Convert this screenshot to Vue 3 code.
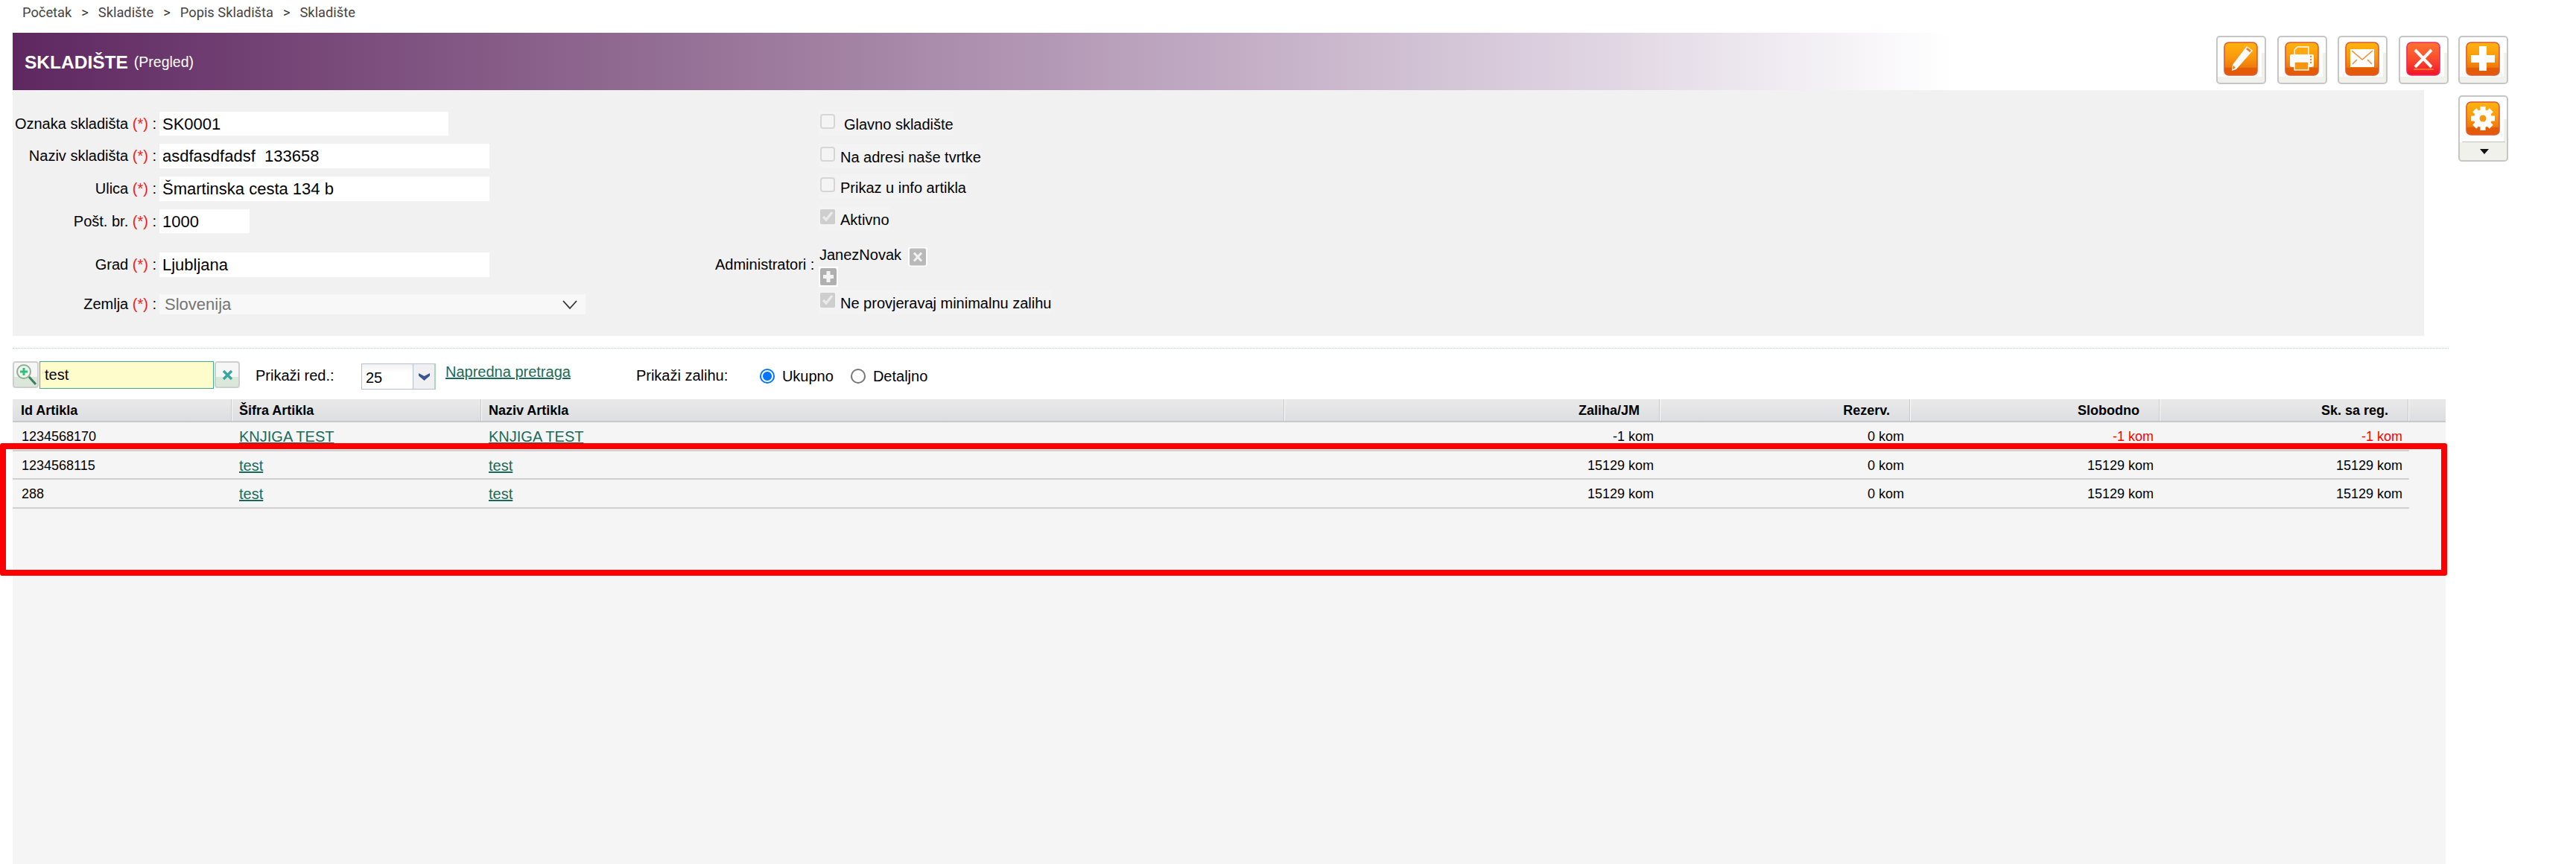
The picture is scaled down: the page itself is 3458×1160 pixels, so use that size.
<script setup>
const crumbs = ['Početak', 'Skladište', 'Popis Skladišta', 'Skladište']
const fields = [
  { label: 'Oznaka skladišta', value: 'SK0001', cls: 'w388', gap: 0 },
  { label: 'Naziv skladišta', value: 'asdfasdfadsf  133658', cls: 'w443', gap: 11 },
  { label: 'Ulica', value: 'Šmartinska cesta 134 b', cls: 'w443', gap: 11 },
  { label: 'Pošt. br.', value: '1000', cls: 'w121', gap: 11 },
  { label: 'Grad', value: 'Ljubljana', cls: 'w443', gap: 26 }
]
const columns = [
  { t: 'Id Artikla', c: 'c1' }, { t: 'Šifra Artikla', c: 'c2' }, { t: 'Naziv Artikla', c: 'c3' },
  { t: 'Zaliha/JM', c: 'c5 num' }, { t: 'Rezerv.', c: 'c6 num' },
  { t: 'Slobodno', c: 'c7 num' }, { t: 'Sk. sa reg.', c: 'c8 num' }, { t: '', c: 'c9' }
]
const rows = [
  { id: '1234568170', s: 'KNJIGA TEST', z: '-1 kom', r: '0 kom', f: '-1 kom', k: '-1 kom', neg: true },
  { id: '1234568115', s: 'test', z: '15129 kom', r: '0 kom', f: '15129 kom', k: '15129 kom' },
  { id: '288', s: 'test', z: '15129 kom', r: '0 kom', f: '15129 kom', k: '15129 kom' }
]
</script>

<template>
  <div class="page">
    <nav class="crumbs">
      <template v-for="(c, i) in crumbs" :key="i">
        <span v-if="i" class="sep">&gt;</span><span>{{ c }}</span>
      </template>
    </nav>

    <div class="top">
      <div class="titlebar"><b>SKLADIŠTE</b><span>(Pregled)</span></div>
      <div class="actions">
        <button class="tool">
          <svg class="tile" viewBox="0 0 46 46">
            <defs>
              <linearGradient id="og" x1="0" y1="0" x2="0" y2="1">
                <stop offset="0" stop-color="#ffb40e" /><stop offset=".45" stop-color="#fb980e" />
                <stop offset=".76" stop-color="#ee7a0a" /><stop offset=".77" stop-color="#e35c06" /><stop offset="1" stop-color="#e55a08" />
              </linearGradient>
              <linearGradient id="rg" x1="0" y1="0" x2="0" y2="1">
                <stop offset="0" stop-color="#ff7430" /><stop offset=".5" stop-color="#fb4d2e" /><stop offset="1" stop-color="#f01226" />
              </linearGradient>
            </defs>
            <rect x="1" y="1" width="44" height="44" rx="6" fill="url(#og)" stroke="#dc5a34" stroke-width="1.6" />
            <path d="M31 6l8 6-22 25-6 2 1-8z" fill="#fff" />
            <path d="M32 8l5 4-2 2-5-4z" fill="#f5792a" />
            <path d="M13 32l3 3-4 2z" fill="#ee7a12" />
          </svg>
        </button>
        <button class="tool">
          <svg class="tile" viewBox="0 0 46 46">
            <rect x="1" y="1" width="44" height="44" rx="6" fill="url(#og)" stroke="#dc5a34" stroke-width="1.6" />
            <path d="M17 7h15v11H13v-7z" fill="#ffa90f" stroke="#fff" stroke-width="1.4" />
            <rect x="7" y="17" width="32" height="17" rx="2" fill="#fafafa" />
            <circle cx="35" cy="20" r="1.2" fill="#f58a20" /><circle cx="35" cy="24" r="1.2" fill="#f58a20" /><circle cx="35" cy="28" r="1.2" fill="#f58a20" />
            <rect x="13" y="27" width="19" height="11" fill="#f7950f" stroke="#fff" stroke-width="1.4" />
          </svg>
        </button>
        <button class="tool">
          <svg class="tile" viewBox="0 0 46 46">
            <rect x="1" y="1" width="44" height="44" rx="6" fill="url(#og)" stroke="#dc5a34" stroke-width="1.6" />
            <rect x="7" y="10" width="32" height="24" fill="#fff" />
            <path d="M9 12l14 12 14-12M10 30l6-6M36 30l-6-6" fill="none" stroke="#f58a30" stroke-width="1.5" />
          </svg>
        </button>
        <button class="tool">
          <svg class="tile" viewBox="0 0 46 46">
            <rect x="1" y="1" width="44" height="44" rx="6" fill="url(#rg)" stroke="#ee2a62" stroke-width="1.6" />
            <path d="M12 11l22 23M34 11L12 34" stroke="#fff" stroke-width="4" />
            <path d="M10 37h27" stroke="#f89a3c" stroke-width="1.2" />
          </svg>
        </button>
        <div class="stack">
          <button class="tool">
            <svg class="tile" viewBox="0 0 46 46">
              <rect x="1" y="1" width="44" height="44" rx="6" fill="url(#og)" stroke="#dc5a34" stroke-width="1.6" />
              <path d="M18 6h10v12h11v10H28v11H18V28H7V18h11z" fill="#fff" />
            </svg>
          </button>
          <button class="tool gear">
            <svg class="tile" viewBox="0 0 46 46">
              <rect x="1" y="1" width="44" height="44" rx="6" fill="url(#og)" stroke="#dc5a34" stroke-width="1.6" />
              <circle cx="23" cy="23" r="12" fill="#fff" />
              <path d="M23 7v32M7 23h32M11.700 11.700l22.600 22.600M34.300 11.700L11.700 34.300" stroke="#fff" stroke-width="7" />
              <circle cx="23" cy="23" r="4.500" fill="#f9960e" />
            </svg>
            <span class="caret"></span>
          </button>
        </div>
      </div>
    </div>

    <section class="panel">
      <div class="left">
        <div v-for="f in fields" :key="f.label" class="field" :style="{ marginTop: f.gap + 'px' }">
          <label>{{ f.label }} <em>(*)</em> :</label>
          <div class="input" :class="f.cls">{{ f.value }}</div>
        </div>
        <div class="field country">
          <label>Zemlja <em>(*)</em> :</label>
          <div class="select">
            <span>Slovenija</span>
            <svg width="22" height="14" viewBox="0 0 22 14"><path d="M2 2l9 10 9-10" fill="none" stroke="#333" stroke-width="1.800" /></svg>
          </div>
        </div>
      </div>
      <div class="right">
        <label class="chk first"><input type="checkbox" disabled /><span>Glavno skladište</span></label>
        <label class="chk second"><input type="checkbox" disabled /><span>Na adresi naše tvrtke</span></label>
        <label class="chk third"><input type="checkbox" disabled /><span>Prikaz u info artikla</span></label>
        <label class="chk fourth"><input type="checkbox" disabled checked /><span>Aktivno</span></label>
        <div class="admin">
          <span class="admin-label">Administratori :</span>
          <div class="admin-value">
            <div class="admin-name">JanezNovak
              <i class="mini"><svg viewBox="0 0 26 25"><rect x="2" y="1" width="22" height="23" rx="2" fill="#b9b9b9" /><path d="M8 7l10 11M18 7L8 18" stroke="#f2f2f2" stroke-width="3" /></svg></i>
            </div>
            <i class="mini plus"><svg viewBox="0 0 26 27"><rect x="2" y="2" width="22" height="23" rx="2" fill="#b0b0b0" /><path d="M13 6v15M6 13.500h14" stroke="#f4f4f4" stroke-width="5" /></svg></i>
          </div>
        </div>
        <label class="chk last"><input type="checkbox" disabled checked /><span>Ne provjeravaj minimalnu zalihu</span></label>
      </div>
    </section>

    <div class="dots"></div>

    <div class="filters">
      <div class="search">
        <button class="sbtn">
          <svg width="31" height="32" viewBox="0 0 31 32">
            <circle cx="13" cy="12" r="9" fill="#eef6ee" stroke="#8fae9a" stroke-width="2" />
            <path d="M13 7v10M8 12h10" stroke="#2fbf7a" stroke-width="3" />
            <path d="M20 19l9 10" stroke="#3d7d62" stroke-width="3" />
          </svg>
        </button>
        <div class="sinput">test</div>
        <button class="sbtn clear">
          <svg width="30" height="32" viewBox="0 0 30 32">
            <path d="M10 11l11 11M21 11L10 22" stroke="#3aa5a0" stroke-width="3.500" />
          </svg>
        </button>
      </div>
      <span class="f-label rows-label">Prikaži red.:</span>
      <div class="pager"><span>25</span><i><svg width="15" height="10" viewBox="0 0 15 10"><path d="M0 0l7.500 4L15 0v3.500L7.500 10 0 3.500z" fill="#3b5590" /></svg></i></div>
      <a class="adv">Napredna pretraga</a>
      <span class="f-label stock">Prikaži zalihu:</span>
      <label class="radio"><input type="radio" name="z" checked />Ukupno</label>
      <label class="radio"><input type="radio" name="z" />Detaljno</label>
    </div>

    <section class="grid">
      <div class="ghead">
        <div v-for="(c, i) in columns" :key="i" class="th" :class="c.c">{{ c.t }}</div>
      </div>
      <div v-for="r in rows" :key="r.id" class="tr">
        <div class="td c1">{{ r.id }}</div>
        <div class="td c2"><a>{{ r.s }}</a></div>
        <div class="td c3"><a>{{ r.s }}</a></div>
        <div class="td c5 num">{{ r.z }}</div>
        <div class="td c6 num">{{ r.r }}</div>
        <div class="td c7 num" :class="{ neg: r.neg }">{{ r.f }}</div>
        <div class="td c8 num" :class="{ neg: r.neg }">{{ r.k }}</div>
      </div>
    </section>

    <div class="highlight"></div>
  </div>
</template>

<style>
html, body { margin: 0; background: #fff; overflow: hidden; }
</style>

<style scoped>
.page { position: relative; width: 3458px; height: 1160px; font-family: "Liberation Sans", Arial, sans-serif; color: #000; overflow: hidden; }
.crumbs { height: 44px; box-sizing: border-box; padding: 5px 0 0 30px; font: 18.300px/24px Roboto, "Liberation Sans", sans-serif; color: #444; display: flex; }
.sep { margin: 0 13px; color: #333; }
.top { height: 77px; position: relative; }
.titlebar { margin-left: 17px; width: 2600px; height: 77px; box-sizing: border-box; padding: 2px 0 0 16px; display: flex; align-items: center; gap: 8px; color: #fff; background: linear-gradient(90deg, #5e2760 0%, #946f95 34%, #b9a0bb 57%, #dfd4e2 81.500%, #f0ecf2 91.600%, #fff 100%); }
.titlebar b { font-size: 24.500px; }
.titlebar span { font-size: 19.500px; }
.actions { position: absolute; top: 4px; left: 2975px; display: flex; gap: 14.500px; align-items: flex-start; }
.stack { display: flex; flex-direction: column; gap: 15px; margin-left: -1.500px; }
.tool { position: relative; width: 67px; height: 65px; padding: 0; box-sizing: border-box; border: 2px solid #c6c6c6; border-radius: 5px; background:
  linear-gradient(#eff1ea, #eff1ea) left bottom / 100% 8px no-repeat,
  linear-gradient(#eff1ea, #eff1ea) right bottom / 4px 65% no-repeat, #fff; display: block; }
.tile { position: absolute; left: 8px; top: 6px; width: 46px; height: 46px; }
.gear { height: 89px; background:
  linear-gradient(#eff1ea, #eff1ea) left bottom / 100% 24px no-repeat,
  linear-gradient(#c4c4c4, #c4c4c4) 3px 60px / 58px 2px no-repeat,
  linear-gradient(#eff1ea, #eff1ea) right 30px / 4px 30px no-repeat, #fff; }
.caret { position: absolute; left: 27px; top: 70px; border: 6px solid transparent; border-top: 7px solid #111; border-bottom: 0; }

.panel { margin-left: 17px; width: 3237px; height: 330px; background: #f1f1f1; display: flex; box-sizing: border-box; padding-top: 29px; }
.left { width: 933px; flex: none; }
.field { display: flex; align-items: center; }
.field label { width: 193px; margin-right: 4px; text-align: right; font-size: 20px; white-space: pre; }
.field em { color: #e22; font-style: normal; }
.input { height: 33px; background: #fff; font-size: 22px; line-height: 33px; padding-left: 4px; box-sizing: border-box; white-space: pre; }
.w388 { width: 388px; height: 32px; }
.w443 { width: 443px; }
.w121 { width: 121px; height: 32px; }
.country { margin-top: 23px; }
.select { width: 572px; height: 27px; background: #f8f8f8; color: #757575; font-size: 22px; padding: 0 10px 0 7px; box-sizing: border-box; display: flex; justify-content: space-between; align-items: center; }
.right { flex: 1; font-size: 20px; }
.chk { display: flex; align-items: flex-start; width: max-content; margin-left: 149px; height: 32px; background: #f3f3f3; }
.chk input { width: 20px; height: 20px; margin: 4px 7px 0 2px; flex: none; }
.chk input:not(:checked) { appearance: none; box-sizing: border-box; border: 2px solid #d6d6d6; border-radius: 4px; background: #f4f4f4; }
.chk input:checked { accent-color: #c8c8c8; }
.chk span { line-height: 36px; }
.chk.first { margin-top: -1px; }
.chk.first span { margin-left: 5px; }
.chk.second { margin-top: 12px; }
.chk.third { margin-top: 9px; }
.chk.fourth { margin-top: 11px; }
.admin { display: flex; margin-top: 21px; }
.admin-label { width: 149px; padding-left: 10px; box-sizing: border-box; line-height: 24px; margin-top: 13px; }
.admin-value { width: 200px; }
.admin-name { height: 28px; line-height: 24px; padding-left: 1px; display: flex; gap: 9px; }
.mini { display: block; width: 26px; height: 26px; background: #fff; margin-top: 2px; }
.mini.plus { height: 27px; margin-top: 0; }
.mini svg { display: block; width: 26px; height: 100%; }
.chk.last { margin-top: 4px; }

.dots { margin: 16px 0 0 17px; width: 3270px; border-top: 1px dotted #bcc9c5; }
.filters { margin: 17px 0 0 17px; height: 40px; display: flex; align-items: flex-start; font-size: 20px; }
.search { display: flex; }
.sbtn { width: 35px; height: 36px; padding: 0; box-sizing: border-box; border: 2px solid #cfcfcf; border-radius: 4px; background: linear-gradient(#f6f6f6 60%, #d9e8d8 60%); display: flex; align-items: center; justify-content: center; }
.sbtn.clear { width: 34px; }
.sinput { width: 234px; height: 37px; margin: 0 1px; box-sizing: border-box; border: 1px solid #3fb191; background: #fffccc; padding-left: 6px; line-height: 35px; }
.f-label { margin: 7px 0 0 0; line-height: 24px; }
.rows-label { margin-left: 21px; width: 142px; }
.pager { width: 100px; height: 35px; margin-top: 3px; box-sizing: border-box; border: 1px solid #b4bfd4; border-right: 2px solid #a8d8b8; background: linear-gradient(#f2f2f2, #fff 35%); display: flex; justify-content: space-between; line-height: 36px; padding-left: 5px; }
.pager i { width: 29px; border-left: 1px solid #b4bfd4; background: #f0f0f2; display: flex; justify-content: center; padding-top: 12px; box-sizing: border-box; }
.pager svg { display: block; }
.adv { margin: 2px 0 0 13px; line-height: 24px; color: #1a6a5a; text-decoration: underline; }
.f-label.stock { margin-left: 88px; width: 166px; }
.radio { display: flex; align-items: center; margin-top: 8px; height: 24px; width: 122px; }
.radio input { appearance: none; box-sizing: border-box; width: 20px; height: 20px; margin: 0 10px 0 0; border: 2px solid #767676; border-radius: 50%; background: #fff; }
.radio input:checked { border-color: #0075ff; background: radial-gradient(circle, #0075ff 0, #0075ff 5.500px, #fff 6.500px); }

.grid { margin: 11px 0 0 17px; width: 3266px; height: 624px; background: #f5f5f5; font-size: 18px; }
.ghead { display: flex; height: 29px; background: linear-gradient(#e8e8e8 0, #e8e8e8 20%, #dcdde0 100%); border-bottom: 2px solid #c8c8c8; }
.th { font-weight: 700; line-height: 30px; border-right: 1px solid #fbfbfb; box-shadow: inset -1px 0 0 #c8c8c8; box-sizing: border-box; padding-left: 11px; white-space: nowrap; }
.th.num { text-align: right; padding: 0 27px 0 0; }
.th.c2, .th.c3, .td.c2, .td.c3 { padding-left: 9px; }
.c1 { width: 295px; flex: none; }
.c2 { width: 335px; flex: none; }
.c3 { width: 1078px; flex: none; }
.c5 { width: 504px; flex: none; }
.c6 { width: 336px; flex: none; }
.c7 { width: 335px; flex: none; }
.c8 { width: 334px; flex: none; }
.c9 { flex: 1; border-right: 0; box-shadow: none; }
.tr { display: flex; width: 3217px; height: 38.500px; border-bottom: 2px solid #d0d0d0; box-sizing: border-box; }
.td { line-height: 38px; padding-left: 12px; box-sizing: border-box; white-space: nowrap; }
.td.num { text-align: right; padding: 0 9px 0 0; }
.td a { color: #1a6a5a; text-decoration: underline; font-size: 20px; }
.neg { color: #f00; }
.highlight { position: absolute; left: 0; top: 595px; width: 3285px; height: 178px; box-sizing: border-box; border: 8px solid #f00; border-radius: 3px; pointer-events: none; }
</style>
